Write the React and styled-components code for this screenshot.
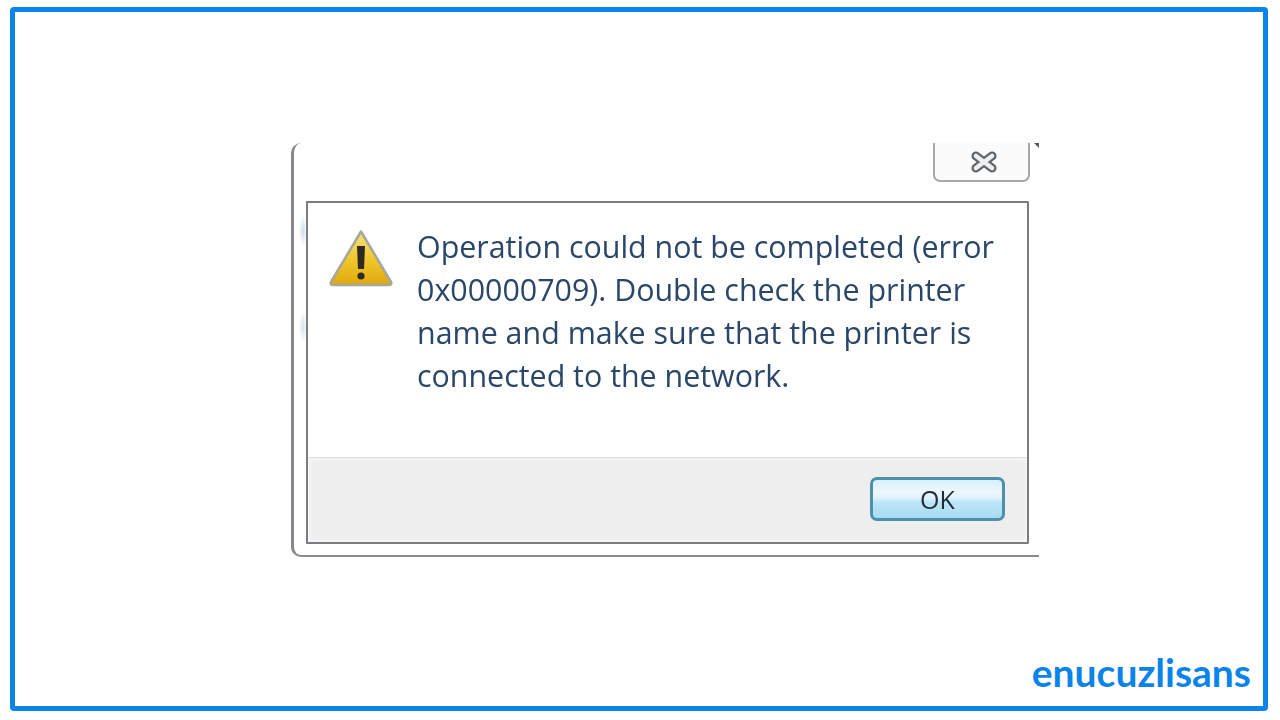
import React from "react";
import styled, { createGlobalStyle } from "styled-components";

const GlobalStyle = createGlobalStyle`
  html, body {
    margin: 0;
    height: 100%;
    background: #fff;
  }
`;

const Frame = styled.div`
  position: relative;
  box-sizing: border-box;
  width: 1258px;
  height: 704px;
  margin: 7px 0 0 10px;
  padding: 131px 0 0 276px;
  background: #fff;
  border: 5px solid #0a84ea;
  border-radius: 4px;
`;

const Dialog = styled.div`
  position: relative;
  box-sizing: border-box;
  width: 748px;
  height: 414px;
  padding: 58px 10px 11px 12px;
  background:
    radial-gradient(ellipse 4px 16px at 9px 88px, #cfdcea, transparent),
    radial-gradient(ellipse 4px 16px at 9px 184px, #d5e0ec, transparent),
    #fff;
  border-left: 3px solid #85878a;
  border-bottom: 2px solid #8a8b8d;
  border-radius: 10px 3px 0 10px;
  filter: blur(0.6px);

  &::after {
    content: "";
    position: absolute;
    top: 0;
    right: 0;
    width: 0;
    height: 0;
    border-top: 5px solid #55585c;
    border-left: 5px solid transparent;
  }
`;

const CloseButton = styled.div`
  position: absolute;
  top: 0;
  right: 9px;
  box-sizing: border-box;
  width: 97px;
  height: 39px;
  display: flex;
  align-items: center;
  justify-content: center;
  padding: 0 0 0 4px;
  background: #fbfbfb;
  border: 2px solid #a8a8a8;
  border-top: 0;
  border-radius: 0 0 7px 7px;
`;

const Panel = styled.div`
  box-sizing: border-box;
  height: 343px;
  display: flex;
  flex-direction: column;
  border: 2px solid #7b7d80;
  border-radius: 1px;
`;

const Body = styled.div`
  flex: 1;
  display: flex;
  gap: 24px;
  padding: 22px 20px 0 21px;
  background: #fff;
`;

const WarningIcon = styled.svg`
  flex: none;
  width: 64px;
  height: 60px;
  margin-top: 4px;
`;

const Message = styled.p`
  margin: 0;
  width: 610px;
  font-family: "Open Sans", "Noto Sans", sans-serif;
  font-size: 30.4px;
  line-height: 43px;
  color: #2a4769;
  white-space: pre-line;
`;

const Footer = styled.div`
  box-sizing: border-box;
  height: 85px;
  display: flex;
  align-items: flex-start;
  justify-content: flex-end;
  padding: 19px 22px 0 0;
  background: #eeeeee;
  border-top: 1px solid #dcdcdc;
  box-shadow: inset 0 0 4px 1px #fbfbfb;
`;

const OkButton = styled.button`
  box-sizing: border-box;
  width: 135px;
  height: 44px;
  padding: 0;
  font-family: "Open Sans", "Noto Sans", sans-serif;
  font-size: 25px;
  font-weight: 500;
  color: #1f2a3a;
  background: linear-gradient(#d8f0fa 0%, #ecf8fd 30%, #dff3fb 48%, #bce6f7 58%, #a9dcf2 100%);
  border: 3px solid #4c90ac;
  border-radius: 7px;
`;

const Logo = styled.div`
  position: absolute;
  right: 12px;
  bottom: 16px;
  font-family: "Lato", "Inter", sans-serif;
  font-weight: 700;
  font-size: 39px;
  line-height: 36px;
  color: #0a84ea;
`;

const App = () => (
  <>
    <GlobalStyle />
    <Frame>
      <Dialog>
        <CloseButton>
          <svg width="28" height="24" viewBox="0 0 28 24">
            <path d="M6 6 L22 18 M22 6 L6 18" stroke="#5f6468" strokeWidth="9" strokeLinecap="round" />
            <path d="M6 6 L22 18 M22 6 L6 18" stroke="#eceef0" strokeWidth="4.6" strokeLinecap="round" />
          </svg>
        </CloseButton>
        <Panel>
          <Body>
            <WarningIcon viewBox="0 0 64 60">
              <defs>
                <linearGradient id="warnFill" x1="0" y1="0" x2="0" y2="1">
                  <stop offset="0" stopColor="#f6e27c" />
                  <stop offset="0.55" stopColor="#efc628" />
                  <stop offset="1" stopColor="#e0a810" />
                </linearGradient>
              </defs>
              <path
                d="M32 2.5 L62 53 Q63 56 60 56 H4 Q1 56 2 53 Z"
                fill="url(#warnFill)"
                stroke="#a8a898"
                strokeWidth="2.6"
                strokeLinejoin="round"
              />
              <path d="M28 17 h8 l-1 23 h-6 z" fill="#2e2a22" />
              <circle cx="32" cy="47" r="3.6" fill="#2e2a22" />
            </WarningIcon>
            <Message>
              {"Operation could not be completed (error\n0x00000709). Double check the printer\nname and make sure that the printer is\nconnected to the network."}
            </Message>
          </Body>
          <Footer>
            <OkButton>OK</OkButton>
          </Footer>
        </Panel>
      </Dialog>
      <Logo>enucuzlisans</Logo>
    </Frame>
  </>
);

export default App;
